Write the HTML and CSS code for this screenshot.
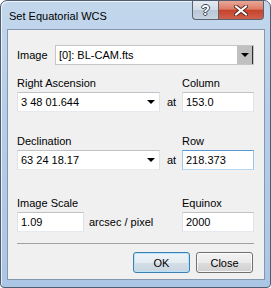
FILE: index.html
```html
<!DOCTYPE html>
<html lang="en">
<head>
    <meta charset="UTF-8">
    <meta name="viewport" content="width=device-width, initial-scale=1.0">
    <title>Set Equatorial WCS</title>
    <link rel="stylesheet" href="styles.css">
</head>
<body>
    <div class="window">
        <div class="titlebar">
            <span class="title">Set Equatorial WCS</span>
            <div class="caption-buttons">
                <span class="cap help">?</span>
                <span class="cap close">
                    <svg width="14" height="11" viewBox="0 0 14 11">
                        <path d="M2 1.5 L12 9.5 M12 1.5 L2 9.5" stroke="#5a2a22" stroke-width="4" stroke-linecap="square"/>
                        <path d="M2 1.5 L12 9.5 M12 1.5 L2 9.5" stroke="#ffffff" stroke-width="2" stroke-linecap="square"/>
                    </svg>
                </span>
            </div>
        </div>

        <div class="client">
            <div class="image-row">
                <span class="label">Image</span>
                <div class="combo list">
                    <span class="value">[0]: BL-CAM.fts</span>
                    <span class="drop-btn"><span class="arrow"></span></span>
                </div>
            </div>

            <div class="group first">
                <span class="label">Right Ascension</span>
                <span></span>
                <span class="label">Column</span>
                <div class="textbox combo">
                    <span class="value">3 48 01.644</span>
                    <span class="arrow"></span>
                </div>
                <span class="at">at</span>
                <div class="textbox"><span class="value">153.0</span></div>
            </div>

            <div class="group second">
                <span class="label">Declination</span>
                <span></span>
                <span class="label">Row</span>
                <div class="textbox combo">
                    <span class="value">63 24 18.17</span>
                    <span class="arrow"></span>
                </div>
                <span class="at">at</span>
                <div class="textbox focused"><span class="value">218.373</span></div>
            </div>

            <div class="group third">
                <span class="label">Image Scale</span>
                <span></span>
                <span class="label">Equinox</span>
                <div class="scale">
                    <div class="textbox short"><span class="value">1.09</span></div>
                    <span class="unit">arcsec / pixel</span>
                </div>
                <span></span>
                <div class="textbox"><span class="value">2000</span></div>
            </div>

            <div class="separator"></div>

            <div class="buttons">
                <span class="btn default">OK</span>
                <span class="btn">Close</span>
            </div>
        </div>
    </div>
</body>
</html>
```

FILE: styles.css
```css
body {
    margin: 0;
    background: #ffffff;
    font-family: "Liberation Sans", Arial, sans-serif;
    font-size: 11px;
    color: #000000;
}
.window {
    width: 271px;
    height: 288px;
    box-sizing: border-box;
    padding: 0 5px 7px 6px;
    border: 1px solid #4e5d70;
    border-radius: 7px 7px 4px 4px;
    background: linear-gradient(180deg, #c3d7ec 0%, #b5cde8 40%, #abc6e4 100%);
    box-shadow: inset 1px 1px 0 rgba(255, 255, 255, 0.7);
}
.titlebar {
    height: 28px;
    display: flex;
    justify-content: space-between;
    align-items: flex-start;
}
.title {
    font-size: 11px;
    padding: 9px 0 0 2px;
    line-height: 13px;
}
.caption-buttons {
    display: flex;
    margin-right: 1px;
}
.cap {
    height: 19px;
    box-sizing: border-box;
    display: flex;
    align-items: center;
    justify-content: center;
    border: 1px solid #5a6270;
    border-top: none;
}
.help {
    width: 26px;
    border-radius: 0 0 0 4px;
    border-right: none;
    background: linear-gradient(180deg, #e3eaf2 0%, #d2dce7 50%, #b9c7d6 51%, #c6d3e0 100%);
    color: #ffffff;
    font-weight: bold;
    font-size: 14px;
    text-shadow: 1px 0 0 #3c4654, -1px 0 0 #3c4654, 0 1px 0 #3c4654, 0 -1px 0 #3c4654;
}
.close {
    width: 46px;
    border-radius: 0 0 4px 0;
    background: linear-gradient(180deg, #e9a798 0%, #dc7b66 45%, #c7432c 52%, #d0604a 100%);
}
.client {
    height: 251px;
    box-sizing: border-box;
    border: 1px solid #8397af;
    background: #f0f0f0;
    padding: 15px 10px 6px 9px;
}
.label {
    line-height: 13px;
}
.image-row {
    display: flex;
    align-items: center;
    height: 20px;
}
.image-row .label {
    width: 38px;
}
.combo.list {
    flex: 1;
    height: 20px;
    box-sizing: border-box;
    display: flex;
    align-items: center;
    background: #ffffff;
    border: 1px solid #c5c5c5;
}
.value {
    padding-left: 3px;
    line-height: 13px;
    flex: 1;
}
.drop-btn {
    width: 16px;
    height: 18px;
    box-sizing: border-box;
    background: #c0c0c0;
    border-right: 1px solid #2e2e2e;
    display: flex;
    align-items: center;
    justify-content: center;
}
.arrow {
    width: 0;
    height: 0;
    border-left: 4px solid transparent;
    border-right: 4px solid transparent;
    border-top: 4px solid #000000;
}
.group {
    display: grid;
    grid-template-columns: 143px 22px 72px;
    row-gap: 2px;
    align-items: center;
}
.group.first {
    margin-top: 12px;
}
.group.second {
    margin-top: 23px;
}
.group.third {
    margin-top: 27px;
}
.textbox {
    height: 20px;
    box-sizing: border-box;
    display: flex;
    align-items: center;
    background: #ffffff;
    border: 1px solid;
    border-color: #c0c2c7 #dfe2e7 #e6e9ed #dfe2e7;
}
.textbox.combo .arrow {
    margin-right: 4px;
}
.textbox.focused {
    border-color: #5a98cf #9fc6e6 #b7d6ef #9fc6e6;
}
.at {
    text-align: center;
    padding-left: 1px;
}
.scale {
    display: flex;
    align-items: center;
    gap: 5px;
}
.textbox.short {
    width: 67px;
}
.separator {
    margin-top: 11px;
    height: 1px;
    background: #a0a0a0;
}
.buttons {
    display: flex;
    justify-content: flex-end;
    gap: 6px;
    margin-top: 8px;
    margin-right: 1px;
}
.btn {
    width: 57px;
    height: 21px;
    box-sizing: border-box;
    display: flex;
    align-items: center;
    justify-content: center;
    border: 1px solid #707070;
    border-radius: 3px;
    background: linear-gradient(180deg, #f2f2f2 0%, #ebebeb 50%, #dddddd 51%, #cfcfcf 100%);
    box-shadow: inset 0 0 0 1px rgba(255, 255, 255, 0.8);
}
.btn.default {
    border-color: #3c7fb1;
    box-shadow: inset 0 0 0 1px #b8e2f7;
    background: linear-gradient(180deg, #eef4f8 0%, #e4ecf2 50%, #d4dee7 51%, #c9d5e0 100%);
}
```
